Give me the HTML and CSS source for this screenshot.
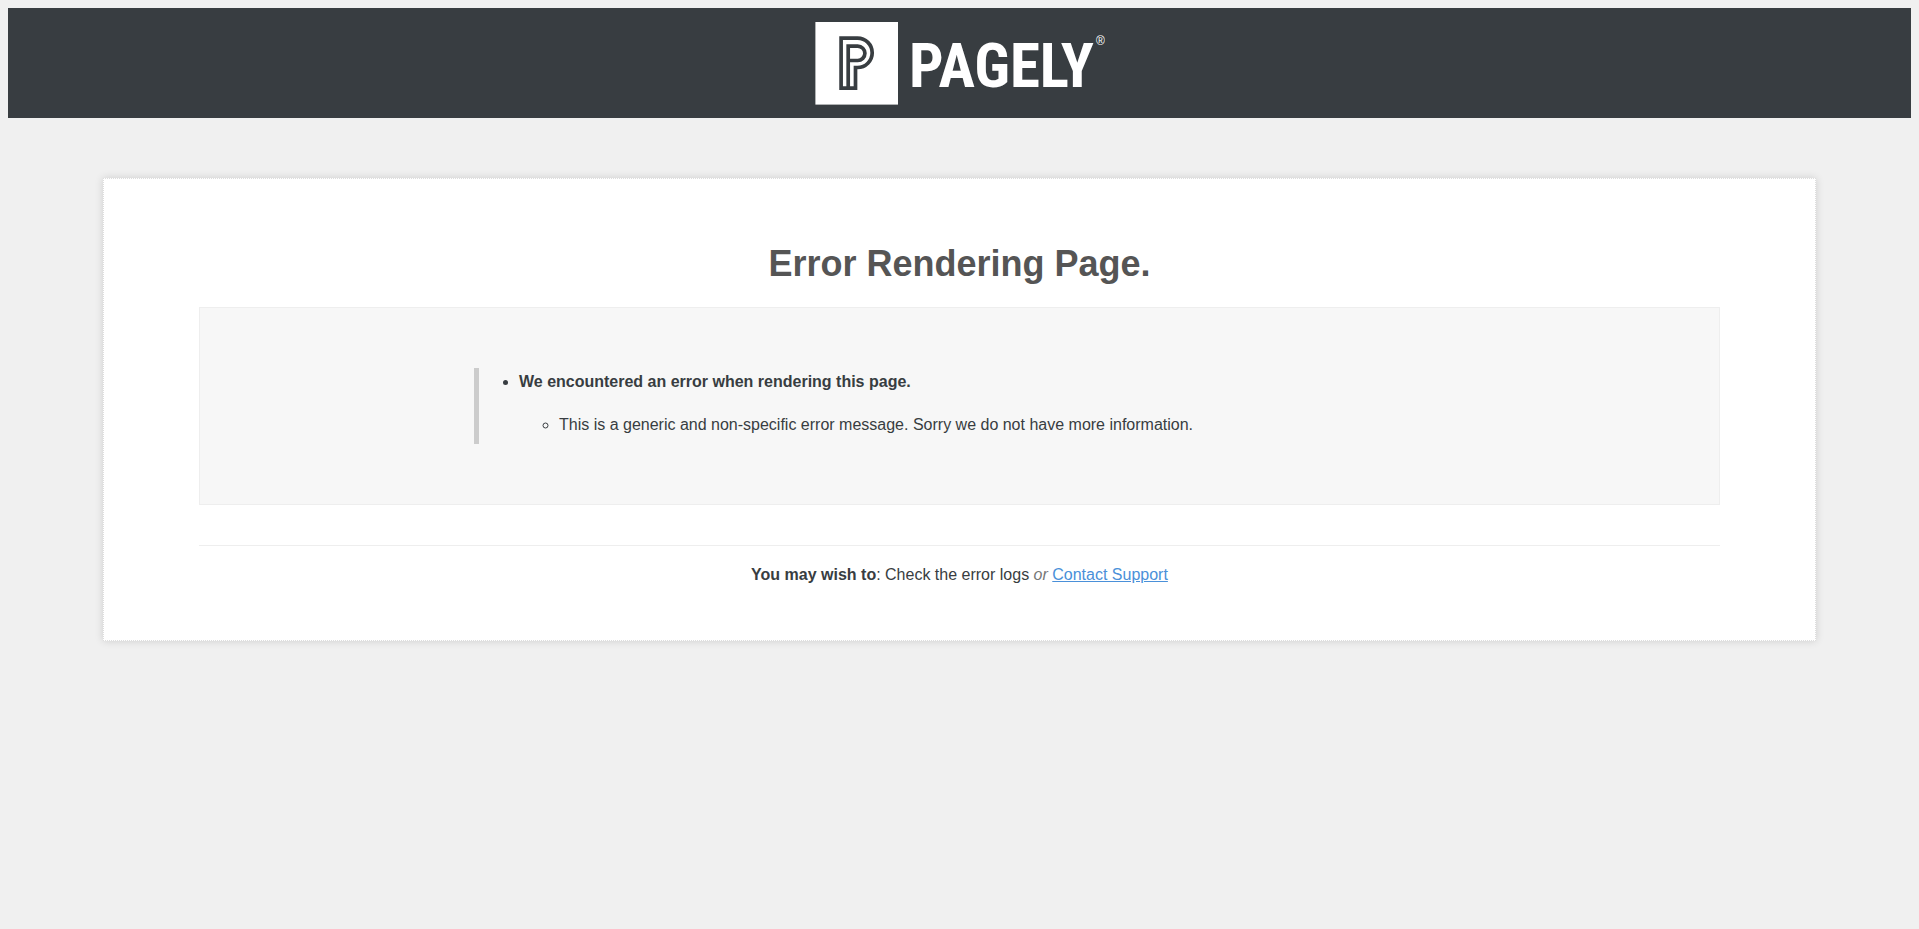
FILE: index.html
```html
<!DOCTYPE html>
<html lang="en">
<head>
  <meta charset="UTF-8">
  <title>Error Rendering Page</title>
  <link rel="stylesheet" href="styles.css">
</head>
<body>

  <header class="header">
    <svg class="logo" width="290" height="83" viewBox="0 0 290 83" role="img" aria-label="Pagely">
      <rect x="0.4" width="82.6" height="82.6" fill="#fff"/>
      <g fill="none" stroke="#383d41" stroke-width="3.7">
        <path d="M26.1 16.1H42.5a14.7 14.7 0 0 1 0 29.4H40.5V66.2H26.1Z"/>
        <path d="M33.2 66.2V24.1H42.7a7.2 7.2 0 0 1 0 14.4H33.2"/>
      </g>
      <text class="logo-name" x="94" y="65">PAGELY</text>
      <text class="logo-mark" x="281" y="23">®</text>
    </svg>
  </header>

  <main class="content">
    <h1>Error Rendering Page.</h1>

    <div class="message">
      <ul class="errors">
        <li><strong>We encountered an error when rendering this page.</strong>
          <ul>
            <li>This is a generic and non-specific error message. Sorry we do not have more information.</li>
          </ul>
        </li>
      </ul>
    </div>

    <hr>
    <p class="help"><strong>You may wish to</strong>: Check the error logs <em>or</em> <a href="#">Contact Support</a></p>
  </main>

</body>
</html>
```

FILE: styles.css
```css
body { margin: 8px; background: #f0f0f0; color: #383d41; font: 16px/18px "Liberation Sans", Arial, sans-serif; }
.header { background: #383d41; padding: 14px 0 13px; text-align: center; }
.logo { display: block; margin: 0 auto; }
.logo-name { fill: #fff; font: bold 61px "Roboto Condensed", "Liberation Sans Narrow", sans-serif; }
.logo-mark { fill: #fff; font-size: 12px; }
.content { box-sizing: border-box; width: 90%; margin: 60px auto; padding: 60px 5% 56px; background: #fff; border: 1px dotted #ddd; box-shadow: 0 0 8px rgba(0, 0, 0, 0.15); }
h1 { margin: 0 0 18px; color: #555; font-size: 36px; line-height: 50px; text-align: center; }
.message { padding: 60px 18%; background: #f7f7f7; border: 1px solid #eee; }
.errors { margin: 0; border-left: 5px solid #ccc; }
li { padding: 5px 0; }
li ul { margin-top: 20px; }
hr { margin: 40px 0 20px; border: 0; border-top: 1px solid #eee; }
.help { margin: 0; text-align: center; }
.help em { color: #777; }
a { color: #4a90d9; }
```
